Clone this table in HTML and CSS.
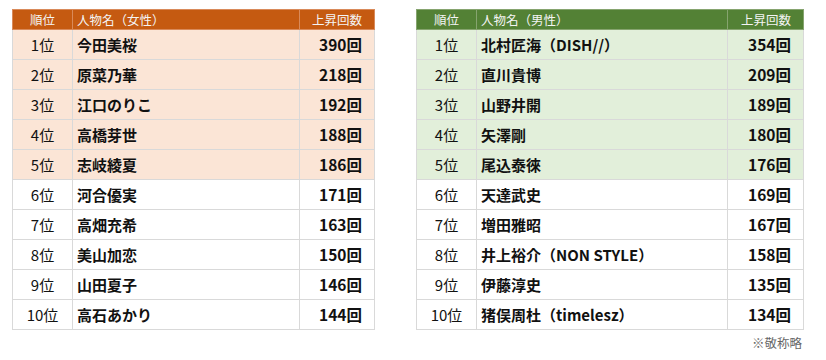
FILE: index.html
```html
<!DOCTYPE html>
<html lang="ja">
    <head>
        <meta charset="UTF-8">
        <meta name="viewport" content="width=device-width, initial-scale=1.0">
        <link rel="stylesheet" href="styles.css">
        <title>上昇回数ランキング</title>
    </head>
    <body>
        <div class="tables">
            <table class="ranking female">
                <tr class="head">
                    <th class="rank">順位</th>
                    <th class="name">人物名（女性）</th>
                    <th class="count">上昇回数</th>
                </tr>
                <tr class="top"><td class="rank">1位</td><td class="name">今田美桜</td><td class="count">390回</td></tr>
                <tr class="top"><td class="rank">2位</td><td class="name">原菜乃華</td><td class="count">218回</td></tr>
                <tr class="top"><td class="rank">3位</td><td class="name">江口のりこ</td><td class="count">192回</td></tr>
                <tr class="top"><td class="rank">4位</td><td class="name">高橋芽世</td><td class="count">188回</td></tr>
                <tr class="top"><td class="rank">5位</td><td class="name">志岐綾夏</td><td class="count">186回</td></tr>
                <tr><td class="rank">6位</td><td class="name">河合優実</td><td class="count">171回</td></tr>
                <tr><td class="rank">7位</td><td class="name">高畑充希</td><td class="count">163回</td></tr>
                <tr><td class="rank">8位</td><td class="name">美山加恋</td><td class="count">150回</td></tr>
                <tr><td class="rank">9位</td><td class="name">山田夏子</td><td class="count">146回</td></tr>
                <tr><td class="rank">10位</td><td class="name">高石あかり</td><td class="count">144回</td></tr>
            </table>

            <div class="right-side">
                <table class="ranking male">
                    <tr class="head">
                        <th class="rank">順位</th>
                        <th class="name">人物名（男性）</th>
                        <th class="count">上昇回数</th>
                    </tr>
                    <tr class="top"><td class="rank">1位</td><td class="name">北村匠海（DISH//）</td><td class="count">354回</td></tr>
                    <tr class="top"><td class="rank">2位</td><td class="name">直川貴博</td><td class="count">209回</td></tr>
                    <tr class="top"><td class="rank">3位</td><td class="name">山野井開</td><td class="count">189回</td></tr>
                    <tr class="top"><td class="rank">4位</td><td class="name">矢澤剛</td><td class="count">180回</td></tr>
                    <tr class="top"><td class="rank">5位</td><td class="name">尾込泰徠</td><td class="count">176回</td></tr>
                    <tr><td class="rank">6位</td><td class="name">天達武史</td><td class="count">169回</td></tr>
                    <tr><td class="rank">7位</td><td class="name">増田雅昭</td><td class="count">167回</td></tr>
                    <tr><td class="rank">8位</td><td class="name">井上裕介（NON STYLE）</td><td class="count">158回</td></tr>
                    <tr><td class="rank">9位</td><td class="name">伊藤淳史</td><td class="count">135回</td></tr>
                    <tr><td class="rank">10位</td><td class="name">猪俣周杜（timelesz）</td><td class="count">134回</td></tr>
                </table>
                <p class="note">※敬称略</p>
            </div>
        </div>
    </body>
</html>
```

FILE: styles.css
```css
body {
    margin: 0;
    background-color: white;
    font-family: "Noto Sans CJK JP", "Noto Sans", sans-serif;
    color: #111;
}

.tables {
    display: flex;
    flex-direction: row;
    align-items: flex-start;
    gap: 41px;
    padding: 9px 0 0 12px;
}

.ranking {
    border-collapse: collapse;
    table-layout: fixed;
    width: 363px;
    border: 1px solid #d0d0d0;
}

.male {
    width: 388px;
}

.ranking th,
.ranking td {
    border: 1px solid #d9d9d9;
    padding: 0 4px;
    white-space: nowrap;
}

.ranking th {
    height: 19px;
    font-size: 12.5px;
    font-weight: normal;
    color: #f4f4f4;
    line-height: 19px;
    text-align: left;
}

.ranking td {
    height: 29px;
    font-size: 15px;
    line-height: 29px;
}

.female .head th {
    background-color: #c55a11;
    border-color: #d98a5a;
}

.male .head th {
    background-color: #538135;
    border-color: #86a46f;
}

.female .top td {
    background-color: #fbe5d6;
}

.male .top td {
    background-color: #e2efda;
}

.ranking .rank {
    width: 51px;
    text-align: center;
}

.ranking td.name {
    font-weight: bold;
}

.ranking .count {
    width: 58px;
    text-align: right;
    padding-right: 12px;
}

.ranking td.count {
    font-weight: bold;
    font-size: 15.5px;
}

.male .count {
    width: 59px;
}

.note {
    margin: 3px 2px 0 0;
    text-align: right;
    font-size: 12.5px;
    color: #666;
}
```
